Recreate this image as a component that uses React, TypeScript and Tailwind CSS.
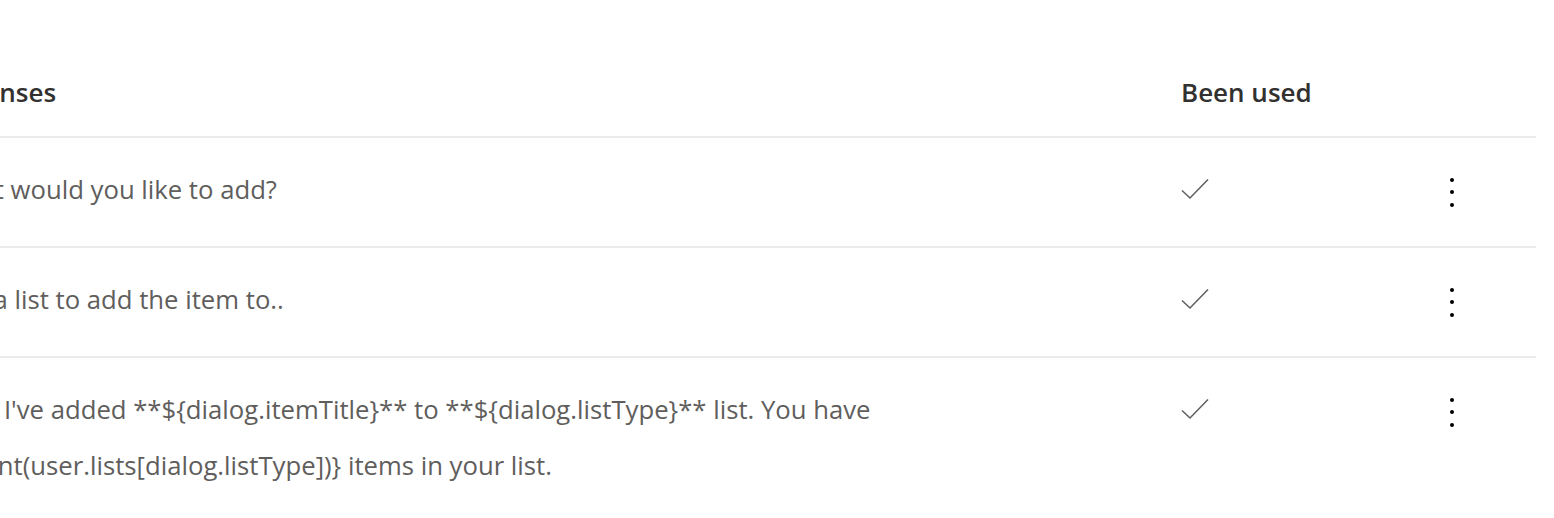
const rows: { indent: string; lines: string[] }[] = [
  { indent: 'pl-[41px]', lines: ['What would you like to add?'] },
  { indent: 'pl-[16px]', lines: ['Select a list to add the item to..'] },
  {
    indent: 'pl-[30px]',
    lines: [
      "Okay, I've added **${dialog.itemTitle}** to **${dialog.listType}** list. You have",
      '${count(user.lists[dialog.listType])} items in your list.',
    ],
  },
]

function Check() {
  return (
    <svg width="28" height="22" viewBox="0 0 28 22" fill="none" className="text-[#605e5c]">
      <path d="M1 11.5 L9 19 L27 0.5" stroke="currentColor" strokeWidth="1.5" />
    </svg>
  )
}

function MoreButton() {
  return (
    <button aria-label="More options" className="mt-[4px] flex flex-col items-center gap-[8.5px] px-2 py-1">
      <span className="block h-[4px] w-[4px] rounded-full bg-black" />
      <span className="block h-[4px] w-[4px] rounded-full bg-black" />
      <span className="block h-[4px] w-[4px] rounded-full bg-black" />
    </button>
  )
}

export default function App() {
  return (
    <div className="h-[518px] w-full overflow-hidden bg-white" style={{ fontFamily: '"Open Sans", sans-serif' }}>
      <div className="ml-[-100px] w-[1636px]">
        {/* header */}
        <div className="grid grid-cols-[1281px_1fr] border-b-2 border-[#edebe9] pt-[64px] pb-[16px]">
          <div className="pl-[23px] text-[26px] font-semibold leading-[56px] text-[#323130]">Responses</div>
          <div className="text-[26px] font-semibold leading-[56px] text-[#323130]">Been used</div>
        </div>

        {rows.map((row, i) => (
          <div
            key={i}
            className="grid grid-cols-[1281px_261px_1fr] border-b-2 border-[#edebe9] pt-[24px] pb-[28px]"
          >
            <div className={`${row.indent} text-[25.7px] leading-[56px] text-[#605e5c]`}>
              {row.lines.map((l) => (
                <div key={l} className="whitespace-nowrap">{l}</div>
              ))}
            </div>
            <div className="flex h-[56px] items-center">
              <Check />
            </div>
            <div className="flex h-[56px] items-center">
              <MoreButton />
            </div>
          </div>
        ))}
      </div>
    </div>
  )
}
